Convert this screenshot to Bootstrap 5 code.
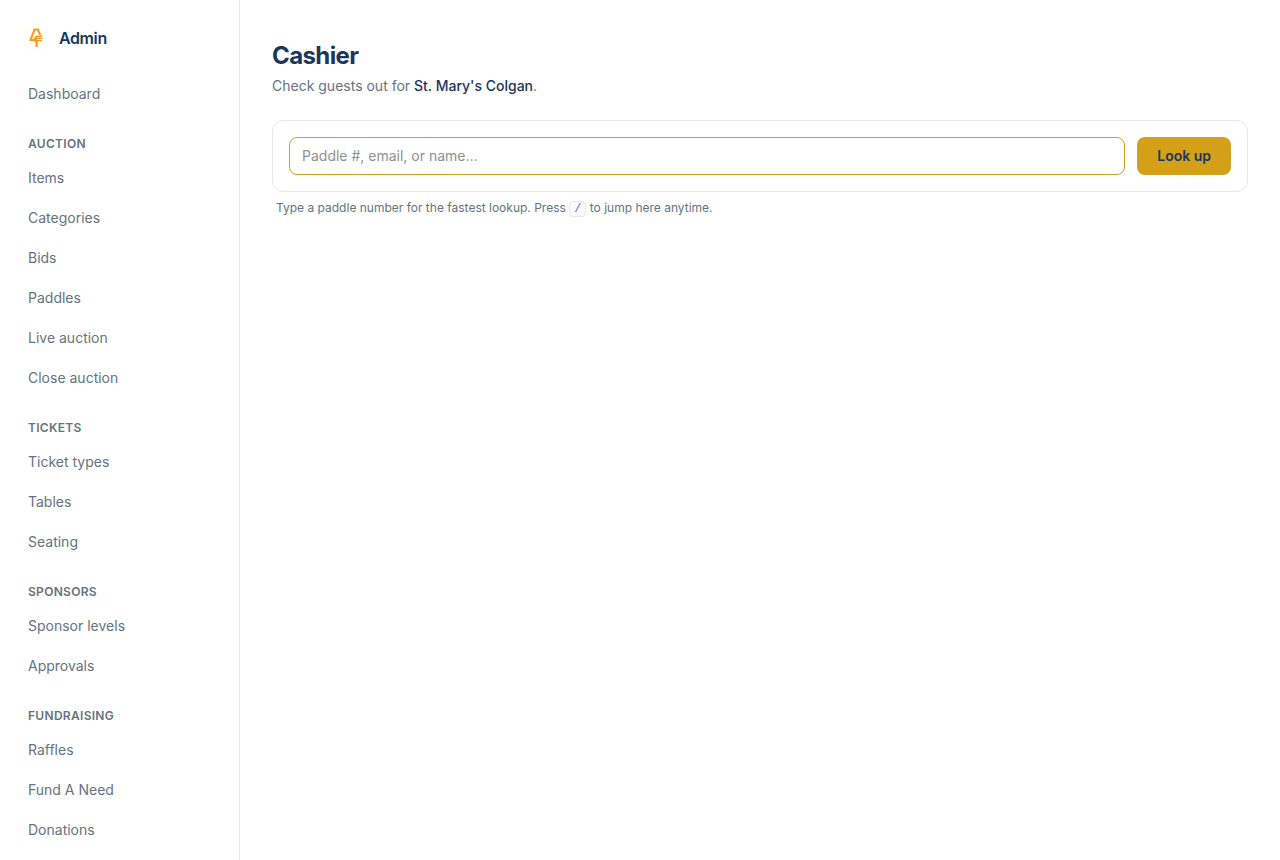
<!DOCTYPE html>
<html lang="en">
<head>
<meta charset="utf-8">
<meta name="viewport" content="width=device-width, initial-scale=1">
<title>Cashier · Admin</title>
<link href="https://cdn.jsdelivr.net/npm/bootstrap@5.3.0/dist/css/bootstrap.min.css" rel="stylesheet">
<style>
  :root { --navy: #1a365d; --gold: #d4a017; --line: #e5e7eb; --muted: #66727f; }
  body { font-family: Inter, "Liberation Sans", sans-serif; font-size: 14px; line-height: 20px; color: var(--navy); background: #fff; }
  .sidebar { width: 240px; border-right: 1px solid var(--line); padding: 16px; }
  .brand { height: 44px; gap: 11px; padding: 0 8px; margin-bottom: 16px; font-size: 16px; font-weight: 600; line-height: 24px; letter-spacing: -0.025em; color: var(--navy); }
  .sidebar .nav { gap: 4px; }
  .sidebar .nav-link { padding: 8px 12px; color: var(--muted); }
  .sidebar .nav-link:hover { color: var(--navy); }
  .group-title { margin: 24px 0 8px; padding: 0 12px; font-size: 12px; line-height: 16px; font-weight: 600; letter-spacing: 0.025em; text-transform: uppercase; color: var(--muted); }
  main { padding: 40px 32px; }
  h1 { font-size: 24px; line-height: 32px; font-weight: 700; letter-spacing: -0.025em; margin-bottom: 4px; color: var(--navy); }
  .subtitle { color: var(--muted); margin-bottom: 24px; }
  .subtitle strong { font-weight: 500; color: var(--navy); }
  .lookup { border: 1px solid var(--line); border-radius: 12px; padding: 16px; gap: 12px; }
  .lookup .form-control { padding: 6px 12px; font-size: 14px; line-height: 24px; border-color: var(--gold); border-radius: 8px; box-shadow: none; }
  .lookup .form-control::placeholder { color: #8e9191; line-height: 24px; }
  .lookup .btn { padding: 8px 20px; font-size: 14px; line-height: 20px; font-weight: 600; color: var(--navy); background: var(--gold); border: 0; border-radius: 8px; }
  .hint { margin: 8px 0 0; padding: 0 4px; font-size: 12px; line-height: 16px; color: var(--muted); }
  .hint kbd { padding: 0 4px; font-family: "Liberation Mono", monospace; font-size: 12px; line-height: 12px; color: var(--muted); background: #f8fafc; border: 1px solid var(--line); border-radius: 4px; }
</style>
</head>
<body>
<div class="d-flex min-vh-100">
  <aside class="sidebar flex-shrink-0">
    <a href="#" class="brand d-flex align-items-center text-decoration-none">
      <svg width="24" height="24" viewBox="0 0 24 24" aria-hidden="true">
        <rect width="24" height="24" fill="#fffefa"/>
        <path d="M9.800 2.500h4.800L17.300 9h-2.200l-2-4.600h-1.800L8 13h2.500v2H5.500v-1.500z" fill="#f59e1b"/>
        <path d="M10 11.800l2.500-2.300h5.800v1.500H13v.8h5.500v1.300H13v.8h5v1.300h-4.200V21h-2.300v-4.500l-1.500-1.500z" fill="#f59e1b"/>
      </svg>
      <span>Admin</span>
    </a>
    <nav aria-label="Admin">
      <div class="nav flex-column"><a class="nav-link" href="#">Dashboard</a></div>
      <h2 class="group-title">Auction</h2>
      <div class="nav flex-column">
        <a class="nav-link" href="#">Items</a>
        <a class="nav-link" href="#">Categories</a>
        <a class="nav-link" href="#">Bids</a>
        <a class="nav-link" href="#">Paddles</a>
        <a class="nav-link" href="#">Live auction</a>
        <a class="nav-link" href="#">Close auction</a>
      </div>
      <h2 class="group-title">Tickets</h2>
      <div class="nav flex-column">
        <a class="nav-link" href="#">Ticket types</a>
        <a class="nav-link" href="#">Tables</a>
        <a class="nav-link" href="#">Seating</a>
      </div>
      <h2 class="group-title">Sponsors</h2>
      <div class="nav flex-column">
        <a class="nav-link" href="#">Sponsor levels</a>
        <a class="nav-link" href="#">Approvals</a>
      </div>
      <h2 class="group-title">Fundraising</h2>
      <div class="nav flex-column">
        <a class="nav-link" href="#">Raffles</a>
        <a class="nav-link" href="#">Fund A Need</a>
        <a class="nav-link" href="#">Donations</a>
      </div>
    </nav>
  </aside>
  <main class="flex-grow-1">
    <h1>Cashier</h1>
    <p class="subtitle">Check guests out for <strong>St. Mary's Colgan</strong>.</p>
    <form class="lookup d-flex" onsubmit="return false">
      <input type="text" class="form-control flex-grow-1" aria-label="Find a guest" placeholder="Paddle #, email, or name…">
      <button type="submit" class="btn flex-shrink-0">Look up</button>
    </form>
    <p class="hint">Type a paddle number for the fastest lookup. Press <kbd>/</kbd> to jump here anytime.</p>
  </main>
</div>
</body>
</html>
